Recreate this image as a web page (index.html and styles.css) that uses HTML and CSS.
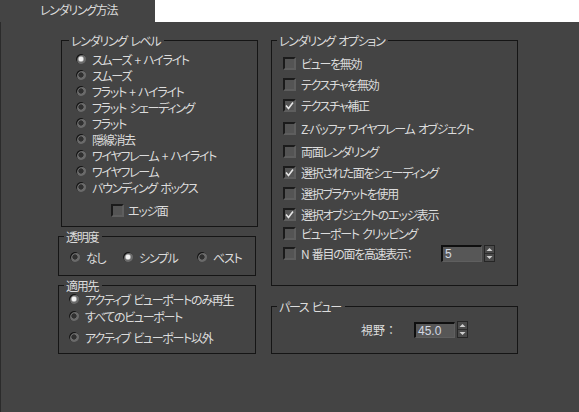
FILE: index.html
```html
<!DOCTYPE html>
<html lang="ja">
<head>
<meta charset="utf-8">
<title>レンダリング方法</title>
<link rel="stylesheet" href="styles.css">
</head>
<body>
<div class="window">
  <div class="tabbar">
    <div class="tab">レンダリング方法</div>
    <div class="tab-rest"></div>
  </div>
  <div class="panel">
    <div class="col col-left">
      <fieldset class="group group-level">
        <legend>レンダリング レベル</legend>
        <div class="group-body">
          <div class="opt"><span class="radio on"></span><span>スムーズ + ハイライト</span></div>
          <div class="opt"><span class="radio"></span><span>スムーズ</span></div>
          <div class="opt"><span class="radio"></span><span>フラット + ハイライト</span></div>
          <div class="opt"><span class="radio"></span><span>フラット シェーディング</span></div>
          <div class="opt"><span class="radio"></span><span>フラット</span></div>
          <div class="opt"><span class="radio"></span><span>隠線消去</span></div>
          <div class="opt"><span class="radio"></span><span>ワイヤフレーム + ハイライト</span></div>
          <div class="opt"><span class="radio"></span><span>ワイヤフレーム</span></div>
          <div class="opt"><span class="radio"></span><span>バウンディング ボックス</span></div>
          <div class="opt opt-check edge"><span class="check"></span><span>エッジ面</span></div>
        </div>
      </fieldset>
      <fieldset class="group group-trans">
        <legend>透明度</legend>
        <div class="group-body trans-row">
          <div class="opt"><span class="radio"></span><span>なし</span></div>
          <div class="opt"><span class="radio on"></span><span>シンプル</span></div>
          <div class="opt"><span class="radio"></span><span>ベスト</span></div>
        </div>
      </fieldset>
      <fieldset class="group group-apply">
        <legend>適用先</legend>
        <div class="group-body">
          <div class="opt apply-1"><span class="radio on"></span><span>アクティブ ビューポートのみ再生</span></div>
          <div class="opt apply-2"><span class="radio"></span><span>すべてのビューポート</span></div>
          <div class="opt apply-3"><span class="radio"></span><span>アクティブ ビューポート以外</span></div>
        </div>
      </fieldset>
    </div>
    <div class="col col-right">
      <fieldset class="group group-options">
        <legend>レンダリング オプション</legend>
        <div class="group-body opt-list">
          <div class="opt opt-check"><span class="check"></span><span>ビューを無効</span></div>
          <div class="opt opt-check"><span class="check"></span><span>テクスチャを無効</span></div>
          <div class="opt opt-check"><span class="check on"><svg viewBox="0 0 9 9" width="9" height="9"><polyline points="1,4.5 3.5,7.5 8,1.5" fill="none" stroke="#e6e6e6" stroke-width="1.6"/></svg></span><span>テクスチャ補正</span></div>
          <div class="opt opt-check loose"><span class="check"></span><span>Z-バッファ ワイヤフレーム オブジェクト</span></div>
          <div class="opt opt-check loose"><span class="check"></span><span>両面レンダリング</span></div>
          <div class="opt opt-check"><span class="check on"><svg viewBox="0 0 9 9" width="9" height="9"><polyline points="1,4.5 3.5,7.5 8,1.5" fill="none" stroke="#e6e6e6" stroke-width="1.6"/></svg></span><span>選択された面をシェーディング</span></div>
          <div class="opt opt-check"><span class="check"></span><span>選択ブラケットを使用</span></div>
          <div class="opt opt-check"><span class="check on"><svg viewBox="0 0 9 9" width="9" height="9"><polyline points="1,4.5 3.5,7.5 8,1.5" fill="none" stroke="#e6e6e6" stroke-width="1.6"/></svg></span><span>選択オブジェクトのエッジ表示</span></div>
          <div class="opt opt-check tight"><span class="check"></span><span>ビューポート クリッピング</span></div>
          <div class="opt opt-check nth"><span class="check"></span><span class="nth-label">N 番目の面を高速表示：</span>
            <span class="field">5</span>
            <span class="spin"><svg viewBox="0 0 11 17" width="11" height="17"><polygon points="2.5,6 5.5,3 8.5,6" fill="#cfcfcf"/><line x1="1" y1="8.5" x2="10" y2="8.5" stroke="#2c2c2c" stroke-width="1"/><polygon points="2.5,11 8.5,11 5.5,14" fill="#cfcfcf"/></svg></span>
          </div>
        </div>
      </fieldset>
      <fieldset class="group group-persp">
        <legend>パース ビュー</legend>
        <div class="group-body fov-row">
          <span class="fov-label">視野：</span>
          <span class="field">45.0</span>
          <span class="spin"><svg viewBox="0 0 11 17" width="11" height="17"><polygon points="2.5,6 5.5,3 8.5,6" fill="#cfcfcf"/><line x1="1" y1="8.5" x2="10" y2="8.5" stroke="#2c2c2c" stroke-width="1"/><polygon points="2.5,11 8.5,11 5.5,14" fill="#cfcfcf"/></svg></span>
        </div>
      </fieldset>
    </div>
  </div>
</div>
</body>
</html>
```
FILE: styles.css
```css
html, body {
  margin: 0;
  padding: 0;
}

body {
  width: 579px;
  height: 412px;
  overflow: hidden;
  background: #444444;
  color: #dcdcdc;
  font-family: "Noto Sans CJK JP", "Noto Sans", sans-serif;
  font-size: 12px;
  letter-spacing: -1.3px;
  word-spacing: 2px;
  font-kerning: normal;
  font-feature-settings: "palt" 1;
}

.window {
  width: 579px;
  height: 412px;
  display: flex;
  flex-direction: column;
}

.tabbar {
  display: flex;
  height: 22px;
  flex: none;
}

.tab {
  width: 155px;
  box-sizing: border-box;
  padding-left: 40px;
  line-height: 20px;
  white-space: nowrap;
}

.tab-rest {
  flex: 1;
  background: #ffffff;
}

.panel {
  flex: 1;
  display: flex;
  gap: 15px;
  box-sizing: border-box;
  border-left: 1px solid #2b2b2b;
  padding: 11px 0 0 57px;
}

.col {
  display: flex;
  flex-direction: column;
}

.col-left {
  width: 198px;
}

.col-right {
  width: 247px;
}

.group {
  margin: 0;
  padding: 0;
  min-width: 0;
  border: 1px solid #151515;
}

.group legend {
  padding: 0 4px 0 2px;
  margin-left: 5px;
  line-height: 15px;
  white-space: nowrap;
}

.opt {
  display: flex;
  align-items: center;
  gap: 6px;
  height: 16px;
  white-space: nowrap;
}

.opt-check {
  gap: 5px;
}

.radio {
  flex: none;
  width: 10px;
  height: 10px;
  border-radius: 50%;
  background: radial-gradient(circle, #303030 0 2.3px, #6a6a6a 2.9px);
  box-shadow: inset 1px 1px 0 #141414;
}

.radio.on {
  background: radial-gradient(circle, #f2f2f2 0 2px, #a3a3a3 2.6px, #6a6a6a 3.4px);
}

.check {
  flex: none;
  width: 13px;
  height: 13px;
  box-sizing: border-box;
  border: 2px solid;
  border-color: #1b1b1b #5e5e5e #5e5e5e #1b1b1b;
  background: #545454;
  display: flex;
  align-items: center;
  justify-content: center;
}

.check svg {
  display: block;
}

/* Rendering level */
.group-level {
  margin: 0 -2px 0 3px;
}

.group-level legend {
  margin-left: 7px;
}

.group-level .group-body {
  padding: 3px 0 8px 14px;
}

.edge {
  margin-top: 7px;
  padding-left: 35px;
  gap: 4px;
}

/* Transparency */
.group-trans {
  margin-top: 2px;
}

.trans-row {
  display: grid;
  grid-template-columns: 53px 74px auto;
  padding: 5px 0 10px 11px;
}

/* Apply to */
.group-apply {
  margin-top: 2px;
}

.group-apply .group-body {
  padding: 0 0 8px 10px;
}

.apply-1 {
  margin-top: -2px;
}

.apply-2 {
  margin-top: 1px;
}

.apply-3 {
  margin-top: 5px;
}

/* Rendering options */
.opt-list {
  display: flex;
  flex-direction: column;
  gap: 5px;
  padding: 7px 11px 23px 11px;
}

.opt-list .loose {
  margin-top: 2px;
}

.opt-list .tight {
  margin-top: -2px;
}

.opt-list .nth {
  height: 17px;
  margin-top: -1px;
  gap: 0;
}

.nth .check {
  margin-right: 5px;
}

.nth-label {
  width: 140px;
}

.field {
  flex: none;
  box-sizing: border-box;
  width: 41px;
  height: 17px;
  border-top: 2px solid #0f0f0f;
  border-left: 2px solid #0f0f0f;
  border-right: 1px solid #5f5f5f;
  border-bottom: 1px solid #5f5f5f;
  background: #575757;
  color: #d3d8e2;
  font-family: "Liberation Sans", Arial, sans-serif;
  font-size: 12px;
  letter-spacing: 0;
  word-spacing: 0;
  line-height: 14px;
  padding-left: 2px;
  font-feature-settings: normal;
}

.spin {
  flex: none;
  width: 11px;
  height: 17px;
  margin-left: 2px;
  box-sizing: border-box;
  background: #4a4a4a;
  outline: 1px solid #262626;
  outline-offset: -1px;
}

.spin svg {
  display: block;
}

/* Perspective view */
.group-persp {
  margin-top: 13px;
}

.fov-row {
  display: flex;
  align-items: center;
  height: 17px;
  padding: 7px 0 15px 89px;
}

.fov-label {
  width: 53px;
  white-space: nowrap;
  letter-spacing: 0;
  font-feature-settings: normal;
}

.fov-row .field {
  height: 16px;
}
```
